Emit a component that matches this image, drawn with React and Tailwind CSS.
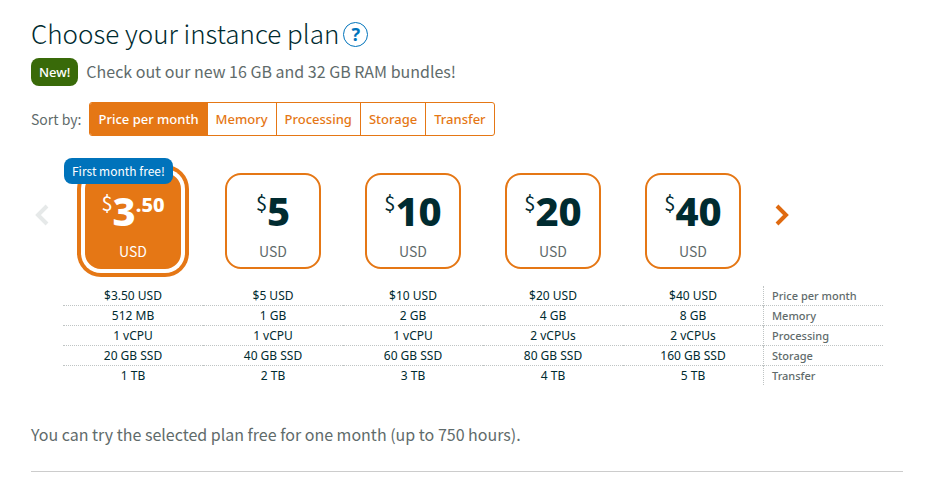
import React, { useState } from 'react';

const plans = [
    { price: '3', cents: '.50', label: '$3.50 USD', memory: '512 MB', cpu: '1 vCPU', storage: '20 GB SSD', transfer: '1 TB', free: true },
    { price: '5', label: '$5 USD', memory: '1 GB', cpu: '1 vCPU', storage: '40 GB SSD', transfer: '2 TB' },
    { price: '10', label: '$10 USD', memory: '2 GB', cpu: '1 vCPU', storage: '60 GB SSD', transfer: '3 TB' },
    { price: '20', label: '$20 USD', memory: '4 GB', cpu: '2 vCPUs', storage: '80 GB SSD', transfer: '4 TB' },
    { price: '40', label: '$40 USD', memory: '8 GB', cpu: '2 vCPUs', storage: '160 GB SSD', transfer: '5 TB' },
];

const specs = [
    { key: 'label', name: 'Price per month' },
    { key: 'memory', name: 'Memory' },
    { key: 'cpu', name: 'Processing' },
    { key: 'storage', name: 'Storage' },
    { key: 'transfer', name: 'Transfer' },
];

const sortOptions = ['Price per month', 'Memory', 'Processing', 'Storage', 'Transfer'];

const SortBar = ({ value, onChange }) => (
    <div className="mt-4 flex items-center gap-2 text-sm">
        <span>Sort by:</span>
        <div className="flex divide-x divide-[#e57715] overflow-hidden rounded-[3px] border border-[#e57715] font-['Noto_Sans',sans-serif] text-[13px] font-medium">
            {sortOptions.map((option) => (
                <button
                    key={option}
                    type="button"
                    onClick={() => onChange(option)}
                    className={`h-8 px-2 ${value === option ? 'bg-[#e57715] text-white' : 'text-[#e57715]'}`}
                >
                    {option}
                </button>
            ))}
        </div>
    </div>
);

const PlanCard = ({ plan, selected, onSelect }) => (
    <label className="relative flex w-[140px] cursor-pointer justify-center">
        <input type="radio" name="plan" value={plan.label} checked={selected} onChange={onSelect} className="sr-only" />
        <span
            className={`flex size-24 flex-col items-center rounded-2xl border-2 border-[#e57715] ${selected ? 'bg-[#e57715] text-white ring-4 ring-[#e57715] ring-offset-4' : 'text-[#002b30]'}`}
        >
            <span className="mt-4 flex h-10 items-start font-['Noto_Sans',sans-serif] leading-10 font-extrabold">
                <span className="font-['Noto_Sans_CJK_JP',sans-serif] text-xl leading-6 font-normal">$</span>
                <span className="text-[40px]">{plan.price}</span>
                {plan.cents && <span className="text-xl leading-7">{plan.cents}</span>}
            </span>
            <span className={`mt-2.5 text-sm leading-5 ${selected ? 'text-white' : 'text-[#5f6b6b]'}`}>USD</span>
        </span>
        {plan.free && (
            <span className="absolute -top-[15px] left-px rounded-lg bg-[#0073bb] px-2 py-1 text-xs leading-[18px] whitespace-nowrap text-white">
                First month free!
            </span>
        )}
    </label>
);

const Chevron = ({ d }) => (
    <svg viewBox="0 0 14 24" className="h-6 w-3.5" fill="none" stroke="currentColor" strokeWidth="4">
        <path d={d} />
    </svg>
);

const SpecTable = () => (
    <table className="w-full table-fixed border-separate border-spacing-0 font-['Noto_Sans',sans-serif] text-xs leading-[19px]">
        <tbody>
            {specs.map((spec, row) => {
                const line = row < specs.length - 1 ? 'border-b border-dotted border-[#bfc4c4]' : 'border-[#bfc4c4]';
                return (
                    <tr key={spec.key}>
                        {plans.map((plan) => (
                            <td key={plan.label} className={`w-[140px] p-0 text-center text-[#002b30] ${line}`}>
                                {plan[spec.key]}
                            </td>
                        ))}
                        <th
                            scope="row"
                            className={`border-l border-dotted py-0 pr-0 pl-2 text-left text-[11px] leading-[19px] font-medium ${line}`}
                        >
                            {spec.name}
                        </th>
                    </tr>
                );
            })}
        </tbody>
    </table>
);

const App = () => {
    const [sort, setSort] = useState('Price per month');
    const [selected, setSelected] = useState(0);

    return (
        <main className="bg-white px-[31px] pt-4 font-['Noto_Sans_CJK_JP',sans-serif] text-[#5f6b6b]">
            <div className="flex items-center gap-1">
                <h1 className="pb-0.5 text-[26px] leading-[34px] font-light text-[#002b30]">Choose your instance plan</h1>
                <button
                    type="button"
                    aria-label="Help"
                    className="size-[25px] rounded-full border border-[#0073bb] font-['Noto_Sans',sans-serif] text-lg leading-5 font-bold text-[#0073bb]"
                >
                    ?
                </button>
            </div>

            <div className="mt-1.5 flex items-center gap-2">
                <span className="rounded-lg bg-[#396a09] px-2 py-1 font-['Noto_Sans',sans-serif] text-[13px] leading-5 font-medium text-white">
                    New!
                </span>
                <p className="pb-0.5 text-base leading-6">Check out our new 16 GB and 32 GB RAM bundles!</p>
            </div>

            <SortBar value={sort} onChange={setSort} />

            <div className="mt-[37px] flex items-start">
                <button type="button" aria-label="Previous plans" disabled className="mt-[30px] w-8 pl-1 text-[#e6e9e9]">
                    <Chevron d="M12 3 3 12l9 9" />
                </button>
                {plans.map((plan, index) => (
                    <PlanCard key={plan.label} plan={plan} selected={selected === index} onSelect={() => setSelected(index)} />
                ))}
                <button type="button" aria-label="Next plans" className="mt-[30px] pl-3 text-[#df6a10]">
                    <Chevron d="m2 3 9 9-9 9" />
                </button>
            </div>

            <div className="mt-[17px] pr-5 pl-8">
                <SpecTable />
            </div>

            <p className="mt-[37px] text-base leading-6">You can try the selected plan free for one month (up to 750 hours).</p>
            <hr className="mt-[25px] border-[#ccc]" />
        </main>
    );
};

export default App;
